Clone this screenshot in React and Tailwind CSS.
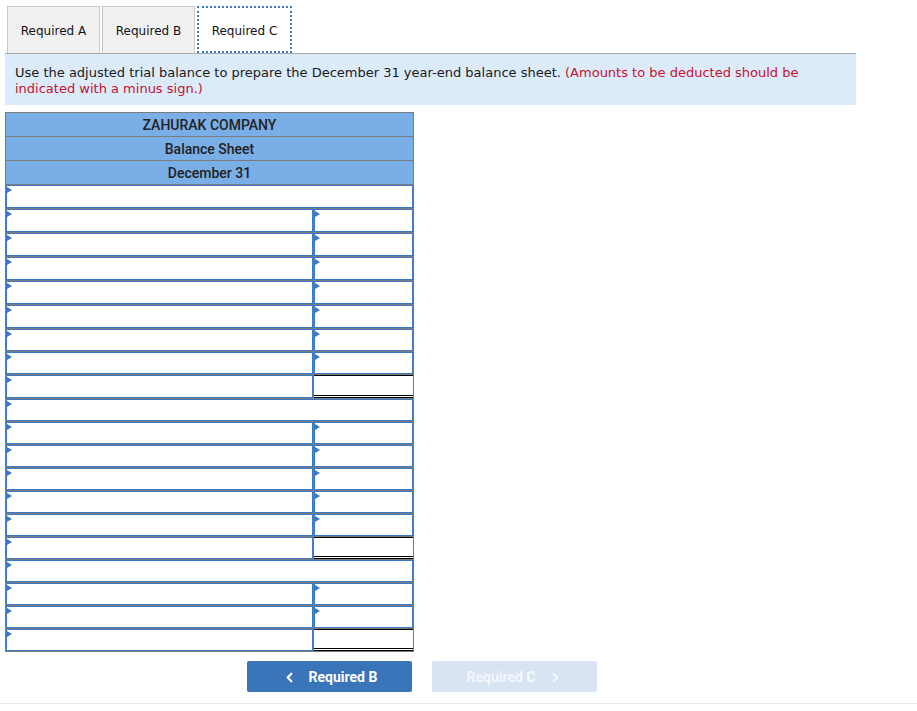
import React from 'react'
import { ChevronLeft, ChevronRight } from 'lucide-react'

// row kinds for the balance sheet body
const rows = [
  ['full', 24], ['two', 24], ['two', 24], ['two', 24], ['two', 24], ['two', 24], ['two', 23], ['two', 23], ['total', 24],
  ['full', 23], ['two', 23], ['two', 23], ['two', 23], ['two', 23], ['two', 23], ['total', 23],
  ['full', 23], ['two', 23], ['two', 23], ['total', 23],
]

function InputBox () {
  return (
    <div className="relative h-full border border-[#3c79c4] bg-white">
      <span className="absolute left-0 top-[1px] border-y-[3px] border-y-transparent border-l-[5px] border-l-[#3c79c4]" />
    </div>
  )
}

function TotalBox () {
  return <div className="h-full bg-white border-t border-black border-b-[3px] border-b-black border-double" />
}

function Tab ({ label, active }) {
  return active ? (
    <div className="w-[95px] h-[47px] flex items-center justify-center pt-[2px] bg-white border-2 border-dotted border-[#3f7ac4] text-[12px] text-[#111]">
      {label}
    </div>
  ) : (
    <div className="w-[93px] h-[47px] flex items-center justify-center pt-[2px] bg-[#f1f1f1] border border-[#c9c9c9] border-b-0 text-[12px] text-[#111]">
      {label}
    </div>
  )
}

export default function App () {
  return (
    <div className="w-[917px] min-h-[711px] bg-white" style={{ fontFamily: '"DejaVu Sans", Verdana, sans-serif' }}>
      <div className="ml-[5px] w-[851px] pt-[6px]">
        <div className="flex items-end gap-[2px] pl-[2px] border-b border-[#a8a8a8]">
          <Tab label="Required A" />
          <Tab label="Required B" />
          <Tab label="Required C" active />
        </div>

        <div className="bg-[#dcebf9] px-[10px] pt-[11px] pb-[8px] text-[13px] leading-[16px] text-[#1a1a1a]">
          <p>
            Use the adjusted trial balance to prepare the December 31 year-end balance sheet.{' '}
            <span className="text-[#c4122f]">(Amounts to be deducted should be indicated with a minus sign.)</span>
          </p>
        </div>

        <div className="mt-[7px] w-[409px] border border-[#7b7b7b]" style={{ fontFamily: 'Roboto, "Liberation Sans", Arial, sans-serif' }}>
          <div className="h-[23px] flex items-center justify-center pt-[1px] bg-[#7aaee6] text-[14px] font-medium text-[#222]">ZAHURAK COMPANY</div>
          <div className="h-[24px] flex items-center justify-center pt-[1px] bg-[#7aaee6] border-t border-[#7b7b7b] text-[14px] font-medium text-[#222]">Balance Sheet</div>
          <div className="h-[24px] flex items-center justify-center pt-[1px] bg-[#7aaee6] border-t border-[#7b7b7b] text-[14px] font-medium text-[#222]">December 31</div>
          {rows.map(([kind, h], i) => (
            <div key={i} className={'flex border-t border-[#7b7b7b] ' + (h === 24 ? 'h-[24px]' : 'h-[23px]')}>
              {kind === 'full' ? (
                <div className="flex-1"><InputBox /></div>
              ) : (
                <>
                  <div className="flex-1 min-w-0"><InputBox /></div>
                  <div className="w-[100px] border-l border-[#7b7b7b]">
                    {kind === 'total' ? <TotalBox /> : <InputBox />}
                  </div>
                </>
              )}
            </div>
          ))}
        </div>

        <div className="mt-[9px] flex gap-[20px] pl-[242px]" style={{ fontFamily: 'Roboto, "Liberation Sans", Arial, sans-serif' }}>
          <button className="w-[165px] h-[31px] flex items-center justify-center gap-[12px] pt-[1px] rounded-[2px] bg-[#3a75ba] text-white text-[14px] font-bold">
            <ChevronLeft className="w-[15px] h-[15px]" strokeWidth={3.5} />
            Required B
          </button>
          <button className="w-[165px] h-[31px] flex items-center justify-center gap-[12px] pt-[1px] rounded-[2px] bg-[#d8e4f2] text-[#f4f7fb] text-[14px] font-bold">
            Required C
            <ChevronRight className="w-[15px] h-[15px]" strokeWidth={3.5} />
          </button>
        </div>
      </div>
      <div className="mt-[11px] border-t border-[#e8e8e8]" />
    </div>
  )
}
